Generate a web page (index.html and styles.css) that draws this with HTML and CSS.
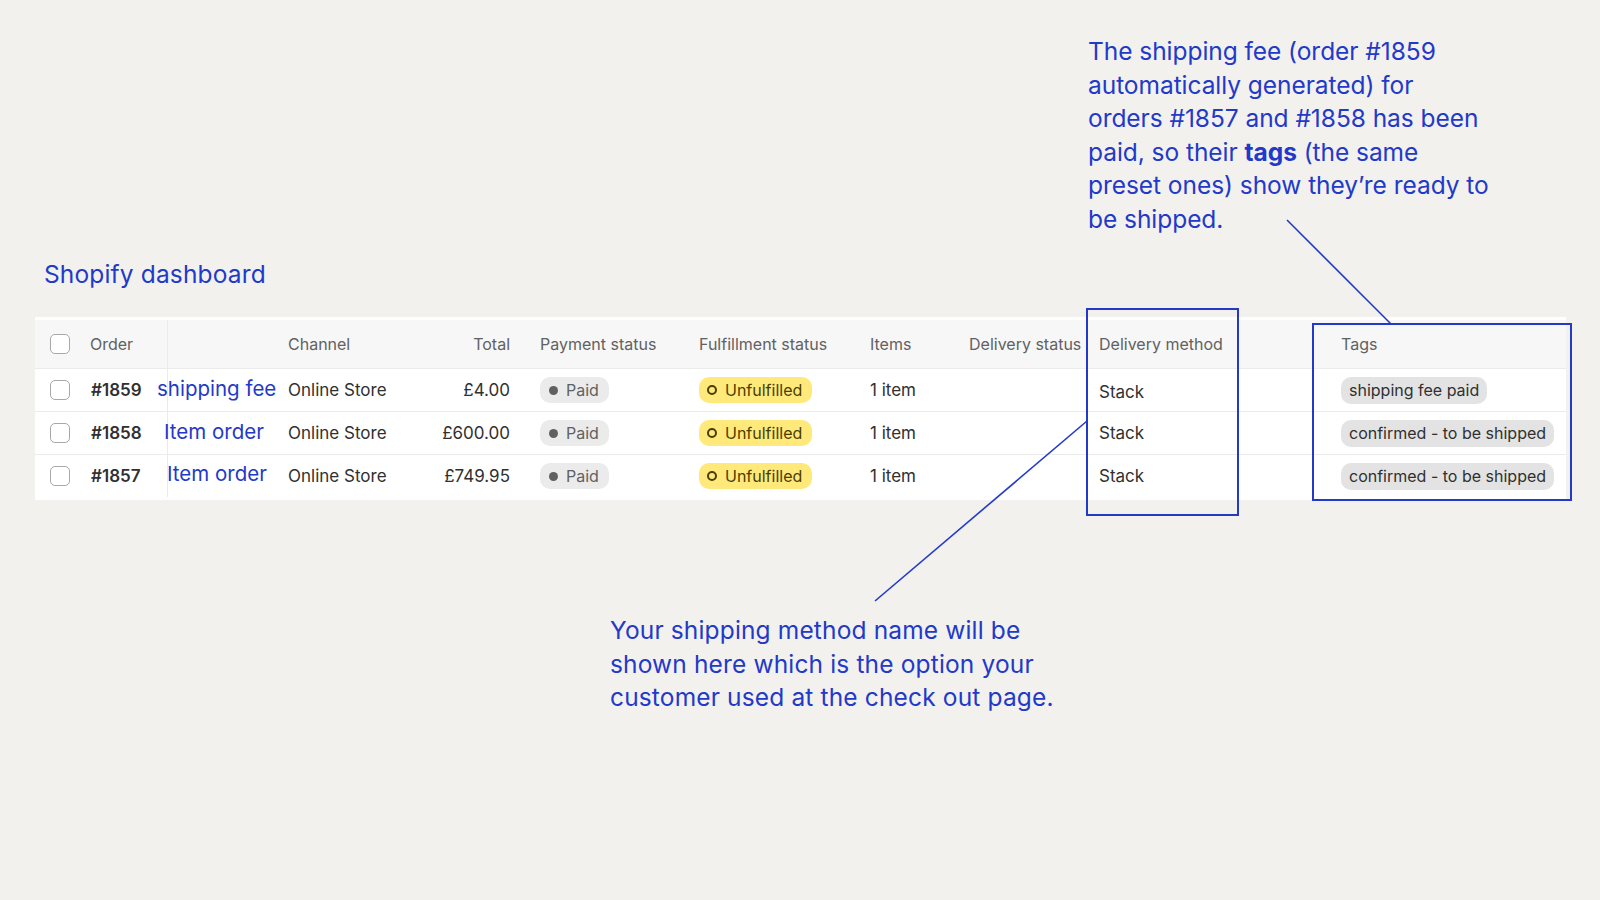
FILE: index.html
```html
<!DOCTYPE html>
<html lang="en">
<head>
<meta charset="utf-8">
<title>Shopify dashboard</title>
<link rel="stylesheet" href="styles.css">
</head>
<body>
<div class="page">
  <p class="note note-top">The shipping fee (order #1859<br>automatically generated) for<br>orders #1857 and #1858 has been<br>paid, so their <b>tags</b> (the same<br>preset ones) show they’re ready to<br>be shipped.</p>

  <h1 class="title">Shopify dashboard</h1>

  <div class="orders">
    <div class="row head">
      <div class="cell c-check"><span class="checkbox"></span></div>
      <div class="cell c-order">Order</div>
      <div class="cell c-label"></div>
      <div class="cell">Channel</div>
      <div class="cell c-total">Total</div>
      <div class="cell">Payment status</div>
      <div class="cell">Fulfillment status</div>
      <div class="cell">Items</div>
      <div class="cell">Delivery status</div>
      <div class="cell">Delivery method</div>
      <div class="cell">Tags</div>
    </div>

    <div class="row">
      <div class="cell c-check"><span class="checkbox"></span></div>
      <div class="cell c-order"><span class="num">#1859</span></div>
      <div class="cell c-label"><span class="label label-fee">shipping fee</span></div>
      <div class="cell">Online Store</div>
      <div class="cell c-total">£4.00</div>
      <div class="cell"><span class="badge badge-paid"><span class="dot"></span>Paid</span></div>
      <div class="cell"><span class="badge badge-unf"><span class="ring"></span>Unfulfilled</span></div>
      <div class="cell">1 item</div>
      <div class="cell"></div>
      <div class="cell c-method c-method-low">Stack</div>
      <div class="cell"><span class="tag">shipping fee paid</span></div>
    </div>

    <div class="row">
      <div class="cell c-check"><span class="checkbox"></span></div>
      <div class="cell c-order"><span class="num">#1858</span></div>
      <div class="cell c-label"><span class="label label-item">Item order</span></div>
      <div class="cell">Online Store</div>
      <div class="cell c-total">£600.00</div>
      <div class="cell"><span class="badge badge-paid"><span class="dot"></span>Paid</span></div>
      <div class="cell"><span class="badge badge-unf"><span class="ring"></span>Unfulfilled</span></div>
      <div class="cell">1 item</div>
      <div class="cell"></div>
      <div class="cell c-method">Stack</div>
      <div class="cell"><span class="tag">confirmed - to be shipped</span></div>
    </div>

    <div class="row">
      <div class="cell c-check"><span class="checkbox"></span></div>
      <div class="cell c-order"><span class="num">#1857</span></div>
      <div class="cell c-label"><span class="label label-item2">Item order</span></div>
      <div class="cell">Online Store</div>
      <div class="cell c-total">£749.95</div>
      <div class="cell"><span class="badge badge-paid"><span class="dot"></span>Paid</span></div>
      <div class="cell"><span class="badge badge-unf"><span class="ring"></span>Unfulfilled</span></div>
      <div class="cell">1 item</div>
      <div class="cell"></div>
      <div class="cell c-method">Stack</div>
      <div class="cell"><span class="tag">confirmed - to be shipped</span></div>
    </div>
  </div>

  <p class="note note-bottom">Your shipping method name will be<br>shown here which is the option your<br>customer used at the check out page.</p>
</div>

<svg class="overlay" width="1600" height="900" viewBox="0 0 1600 900" aria-hidden="true">
  <rect x="1087" y="309" width="151" height="206" fill="none" stroke="#2339c9" stroke-width="2"/>
  <rect x="1313" y="324" width="258" height="176" fill="none" stroke="#2339c9" stroke-width="2"/>
  <line x1="1287" y1="220" x2="1391" y2="324" stroke="#2339c9" stroke-width="1.6"/>
  <line x1="875" y1="601" x2="1087" y2="421" stroke="#2339c9" stroke-width="1.6"/>
</svg>
</body>
</html>
```

FILE: styles.css
```css
* { box-sizing: border-box; }

html, body {
  margin: 0;
  padding: 0;
}

body {
  width: 1600px;
  height: 900px;
  overflow: hidden;
  background: #f2f1ee;
  font-family: Inter, "Liberation Sans", sans-serif;
  color: #303030;
  position: relative;
}

.page {
  padding: 35px 0 0 35px;
}

.note {
  margin: 0;
  font-family: Inter, "Liberation Sans", sans-serif;
  font-size: 24.5px;
  line-height: 33.5px;
  color: #2339c9;
  font-weight: 400;
  letter-spacing: 0.15px;
}

.note b { font-weight: 700; }

.note-top {
  margin-left: 1053px;
  letter-spacing: -0.05px;
}

.title {
  margin: 22px 0 0 9px;
  font-family: Inter, "Liberation Sans", sans-serif;
  font-size: 24.5px;
  line-height: 33.5px;
  font-weight: 400;
  color: #2339c9;
  letter-spacing: 0.15px;
}

.orders {
  margin-top: 25.5px;
  width: 1531px;
  background: #ffffff;
  padding: 3px 0 3px 0;
}

.row {
  display: grid;
  grid-template-columns: 55px 78px 120px 122px 130px 159px 171px 99px 130px 242px 225px;
  height: 43px;
  border-top: 1px solid #ebebeb;
  font-size: 17px;
  color: #303030;
}

.row.head {
  height: 48px;
  border-top: none;
  background: #f7f7f7;
  font-size: 16px;
  color: #616161;
}

.cell {
  display: flex;
  align-items: center;
  white-space: nowrap;
  min-width: 0;
}

.c-check {
  padding-left: 15px;
}

.c-order {
  border-right: 1px solid #ebebeb;
}

.c-total {
  justify-content: flex-end;
  padding-right: 30px;
}

.c-method-low {
  padding-top: 3px;
}

.checkbox {
  display: block;
  width: 20px;
  height: 20px;
  border: 1.5px solid #a8a8a8;
  border-radius: 5px;
  background: #ffffff;
}

.num {
  font-weight: 600;
  color: #303030;
  margin-left: 1px;
}

.label {
  font-family: Inter, "Liberation Sans", sans-serif;
  font-size: 20.5px;
  color: #2339c9;
  position: relative;
}

.label-fee { margin-left: -11px; top: -2px; }
.label-item { margin-left: -4px; top: -2px; }
.label-item2 { margin-left: -1px; top: -3px; }

.badge {
  display: inline-flex;
  align-items: center;
  height: 26px;
  border-radius: 10px;
  font-size: 16px;
}

.badge-paid {
  background: #ebebeb;
  color: #616161;
  padding: 0 10px 0 9px;
}

.dot {
  width: 9px;
  height: 9px;
  border-radius: 50%;
  background: #616161;
  margin-right: 8px;
}

.badge-unf {
  background: #ffe97a;
  color: #4a3f00;
  padding: 0 10px 0 8px;
}

.ring {
  width: 10px;
  height: 10px;
  border-radius: 50%;
  border: 2px solid #4a3f00;
  margin-right: 8px;
}

.tag {
  display: inline-flex;
  align-items: center;
  height: 27px;
  padding: 0 8px;
  border-radius: 10px;
  background: #e3e3e3;
  font-size: 16px;
  color: #303030;
}

.note-bottom {
  margin-top: 114px;
  margin-left: 575px;
}

.overlay {
  position: absolute;
  left: 0;
  top: 0;
  pointer-events: none;
}
```
